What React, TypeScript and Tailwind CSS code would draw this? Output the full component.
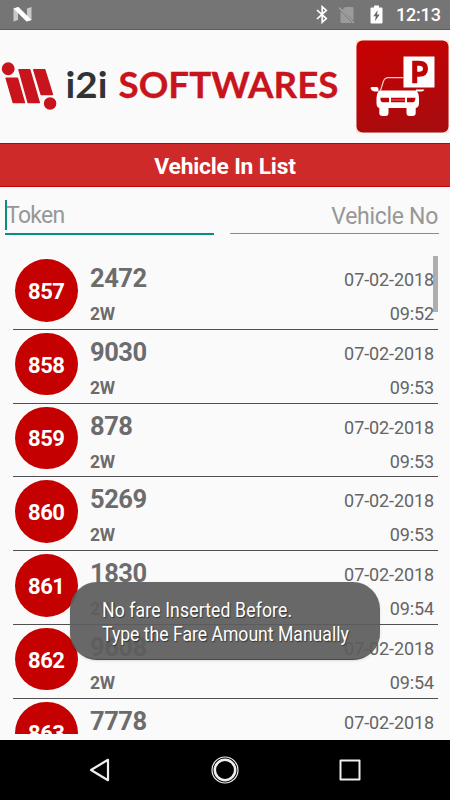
import React, { useState } from "react";

interface Vehicle {
  token: number;
  vehicleNo: string;
  type: string;
  date: string;
  time: string;
}

const vehicles: Vehicle[] = [
  { token: 857, vehicleNo: "2472", type: "2W", date: "07-02-2018", time: "09:52" },
  { token: 858, vehicleNo: "9030", type: "2W", date: "07-02-2018", time: "09:53" },
  { token: 859, vehicleNo: "878", type: "2W", date: "07-02-2018", time: "09:53" },
  { token: 860, vehicleNo: "5269", type: "2W", date: "07-02-2018", time: "09:53" },
  { token: 861, vehicleNo: "1830", type: "2W", date: "07-02-2018", time: "09:54" },
  { token: 862, vehicleNo: "9608", type: "2W", date: "07-02-2018", time: "09:54" },
  { token: 863, vehicleNo: "7778", type: "2W", date: "07-02-2018", time: "09:54" },
];

const StatusBar: React.FC = () => (
  <div className="flex h-[30px] shrink-0 items-center border-b border-[#5c5c5c] bg-[#757575] pl-[13px] pr-[10px] text-white">
    <svg width="19" height="15" viewBox="0 0 19 15">
      <path d="M0.5 1.5 5 0v13L0.5 14.5zM14 1.5 18.5 0v13L14 14.5z" fill="#c9c9c9" />
      <path d="M0.5 1.5 5.5 0 18.5 13 13.5 14.5z" fill="#fff" />
    </svg>
    <div className="ml-auto flex items-center">
      <svg width="12" height="19" viewBox="0 0 12 19" fill="none" stroke="#fff" strokeWidth="1.7">
        <path d="M1 5 10.3 13.600 6.200 17.300V1.700l4.100 3.700L1 14" />
      </svg>
      <svg className="ml-[10px]" width="17" height="18" viewBox="0 0 17 18">
        <path d="M7 1h7.500q1 0 1 1v12.500L4.300 3.700zM3 5.500 14 17H3.500Q2.500 17 2.500 16V6z" fill="#9b9b9b" />
        <path d="m1 1.500 15 15.500" stroke="#a4a4a4" strokeWidth="1.400" />
      </svg>
      <svg className="ml-[15px]" width="13" height="19" viewBox="0 0 13 19">
        <path d="M4 0.500h5v2h2.500q1 0 1 1V17.500q0 1-1 1h-10q-1 0-1-1V3.500q0-1 1-1H4z" fill="#fff" />
        <path d="M7.800 5 3.300 11.200h2.500L5 16.200l4.700-6.700H7z" fill="#686868" />
      </svg>
      <span className="ml-[13px] w-[44px] whitespace-nowrap text-[18px] font-medium leading-[30px] tracking-[-0.200px]">12:13</span>
    </div>
  </div>
);

const Logo: React.FC = () => (
  <svg className="mt-[10px] h-[92px] w-[345px]" viewBox="0 0 345 92">
    <g fill="#c8141c" stroke="#c8141c" strokeWidth="1.500" strokeLinejoin="round">
      <circle cx="8.200" cy="28.800" r="5.700" />
      <circle cx="50.100" cy="63.500" r="5.500" />
      <path d="M6.200 38.200H17.400L24.400 62.600H13.300z" />
      <path d="M19 29.800H29.700L39.300 62.600H28.200z" />
      <path d="M33.800 29.800H44.700L52.400 54.400H41.200z" />
    </g>
    <text x="65.500" y="57.700" fontSize="36" fontWeight="700" fill="#303437" textLength="42" lengthAdjust="spacingAndGlyphs" className="font-['Lato',sans-serif]">
      i2i
    </text>
    <text x="118.500" y="57.700" fontSize="36" fontWeight="700" fill="#c8141c" stroke="#c8141c" strokeWidth="0.300" textLength="220" lengthAdjust="spacingAndGlyphs" className="font-['Lato',sans-serif]">
      SOFTWARES
    </text>
  </svg>
);

const ParkingIcon: React.FC = () => (
  <svg className="ml-auto mr-px mt-[10px] h-[93px] w-[93px]" viewBox="0 0 93 93">
    <defs>
      <linearGradient id="parking" x1="0" y1="0" x2="0.300" y2="1">
        <stop offset="0" stopColor="#c90000" />
        <stop offset="1" stopColor="#aa0b0e" />
      </linearGradient>
    </defs>
    <rect width="93" height="93" fill="#f7e6df" />
    <rect x="0.500" y="0.500" width="92" height="92" rx="6" fill="url(#parking)" />
    {/* windshield */}
    <path d="M24.500 50.500 27.500 41Q28.800 37.600 32.500 37.600H47.500" fill="none" stroke="#f3caca" strokeWidth="1.200" />
    {/* mirrors */}
    <path d="M15.500 47H20.500Q22.500 47.200 22.500 49V51.500H18.500Q15 50.500 14.500 48z" fill="#fff" />
    <path d="M60 49.500H68.500Q67.500 51.500 65.500 51.500H60z" fill="#fff" />
    {/* body */}
    <path d="M23 50.500H60.500Q63 53.500 63 58V63Q63 67.700 59.700 68V73Q59.700 76 56.500 76H53.500Q50.500 76 50.500 73V68H32.500V73Q32.500 76 29.500 76H26.500Q23.300 76 23.300 73V68Q20.500 67.500 20.500 63V58Q20.500 53.500 23 50.500z" fill="#fff" />
    <path d="M24.500 57.800H33V62.300H26.500Q25 62.300 24.500 60zM35 57.800H49V62.300H35zM51 57.800H59.500L59 60.500Q58.500 62.300 57 62.300H51z" fill="#bb0506" />
    <path d="M35 60H49" stroke="#e28787" strokeWidth="0.800" />
    <rect x="47.500" y="16.500" width="31" height="31" fill="#fff" />
    <path d="M58.700 43.300V23.300H63Q69.500 23.300 69.500 28.700T63 34.300H59" fill="none" stroke="#bd0507" strokeWidth="5" />
  </svg>
);

const VehicleRow: React.FC<{ vehicle: Vehicle }> = ({ vehicle }) => (
  <li className="flex h-[73.750px] shrink-0 border-b border-[#505050] pl-[2px] pr-[4px] pt-[3px]">
    <div className="flex size-[62.500px] shrink-0 items-center justify-center rounded-full bg-[#c40000] pt-[2px] text-[22px] font-bold tracking-[-0.400px] text-white">
      {vehicle.token}
    </div>
    <div className="ml-[12.500px] font-bold text-[#6c6c6c]">
      <p className="h-[38px] text-[25.500px] leading-[38px] tracking-[-0.450px]">{vehicle.vehicleNo}</p>
      <p className="text-[17.500px] leading-[34px] tracking-[-0.300px]">{vehicle.type}</p>
    </div>
    <div className="ml-auto text-right text-[18px] tracking-[-0.100px] text-[#656565]">
      <p className="h-[38px] leading-[42px]">{vehicle.date}</p>
      <p className="leading-[34px]">{vehicle.time}</p>
    </div>
  </li>
);

const NavigationBar: React.FC = () => (
  <nav className="flex h-[60px] items-center justify-between bg-black px-[87px]">
    <svg width="26" height="28" viewBox="0 0 26 28" fill="none" stroke="#eee" strokeWidth="2.200" strokeLinejoin="round">
      <path d="M4 14 21 3.800v20.400z" />
    </svg>
    <svg width="28" height="28" viewBox="0 0 28 28" fill="none" stroke="#eee">
      <circle cx="14" cy="14" r="13" strokeWidth="1.200" />
      <circle cx="14" cy="14" r="10.200" strokeWidth="2.500" />
    </svg>
    <svg width="26" height="28" viewBox="0 0 26 28" fill="none" stroke="#eee" strokeWidth="2" strokeLinejoin="round">
      <rect x="3.500" y="4.500" width="19" height="19" />
    </svg>
  </nav>
);

const App: React.FC = () => {
  const [token, setToken] = useState("");
  const [vehicleNo, setVehicleNo] = useState("");

  return (
    <div className="relative flex h-[800px] w-[450px] flex-col overflow-hidden bg-[#fafafa] font-['Roboto',sans-serif]">
      <StatusBar />
      <header className="flex h-[113px] shrink-0">
        <Logo />
        <ParkingIcon />
      </header>
      <h1 className="h-[44px] shrink-0 border-y border-[#c40000] bg-[#cf2a2a] text-center text-[22.800px] font-bold leading-[45px] tracking-[-0.200px] text-white">
        Vehicle In List
      </h1>

      {/* Search */}
      <div className="flex h-[69px] shrink-0 gap-4 pl-[5px] pr-[11px] pt-[13px] text-[23px]">
        <div className="flex h-[35px] flex-1 border-b-2 border-[#0a8f7f]">
          <span className="h-[30px] w-[2px] bg-[#0a8f7f]" />
          <input
            value={token}
            onChange={(e) => setToken(e.target.value)}
            placeholder="Token"
            className="-ml-[1px] h-[33px] w-full tracking-[-0.700px] placeholder:text-[#979797] outline-none"
          />
        </div>
        <div className="h-[34px] flex-1 border-b border-[#8c8c8c]">
          <input
            value={vehicleNo}
            onChange={(e) => setVehicleNo(e.target.value)}
            placeholder="Vehicle No"
            className="h-[32px] w-full pr-px text-right tracking-[-0.300px] placeholder:text-[#979797] outline-none"
          />
        </div>
      </div>

      {/* List */}
      <div className="relative ml-[13px] mr-[12px] h-[477.500px] shrink-0 overflow-hidden">
        <ul className="flex flex-col">
          {vehicles.map((v) => (
            <VehicleRow key={v.token} vehicle={v} />
          ))}
        </ul>
        <span className="absolute right-0 top-0 h-[56px] w-[5px] bg-black/30" />
      </div>

      <div className="mt-auto">
        <NavigationBar />
      </div>

      {/* Toast */}
      <div className="absolute left-[70px] top-[582px] h-[78px] w-[310px] rounded-[27px] border-b border-[#4a4a4a] bg-[#5c5c5c]/93 pl-[31.500px] pt-[16px] shadow-sm">
        <p className="origin-left scale-x-[0.880] whitespace-nowrap text-[20px] leading-6 text-white [text-shadow:1px_1px_1px_rgba(0,0,0,0.5)]">
          <span className="tracking-[0.150px]">No fare Inserted Before.</span>
          <br />
          Type the Fare Amount Manually
        </p>
      </div>
    </div>
  );
};

export default App;
